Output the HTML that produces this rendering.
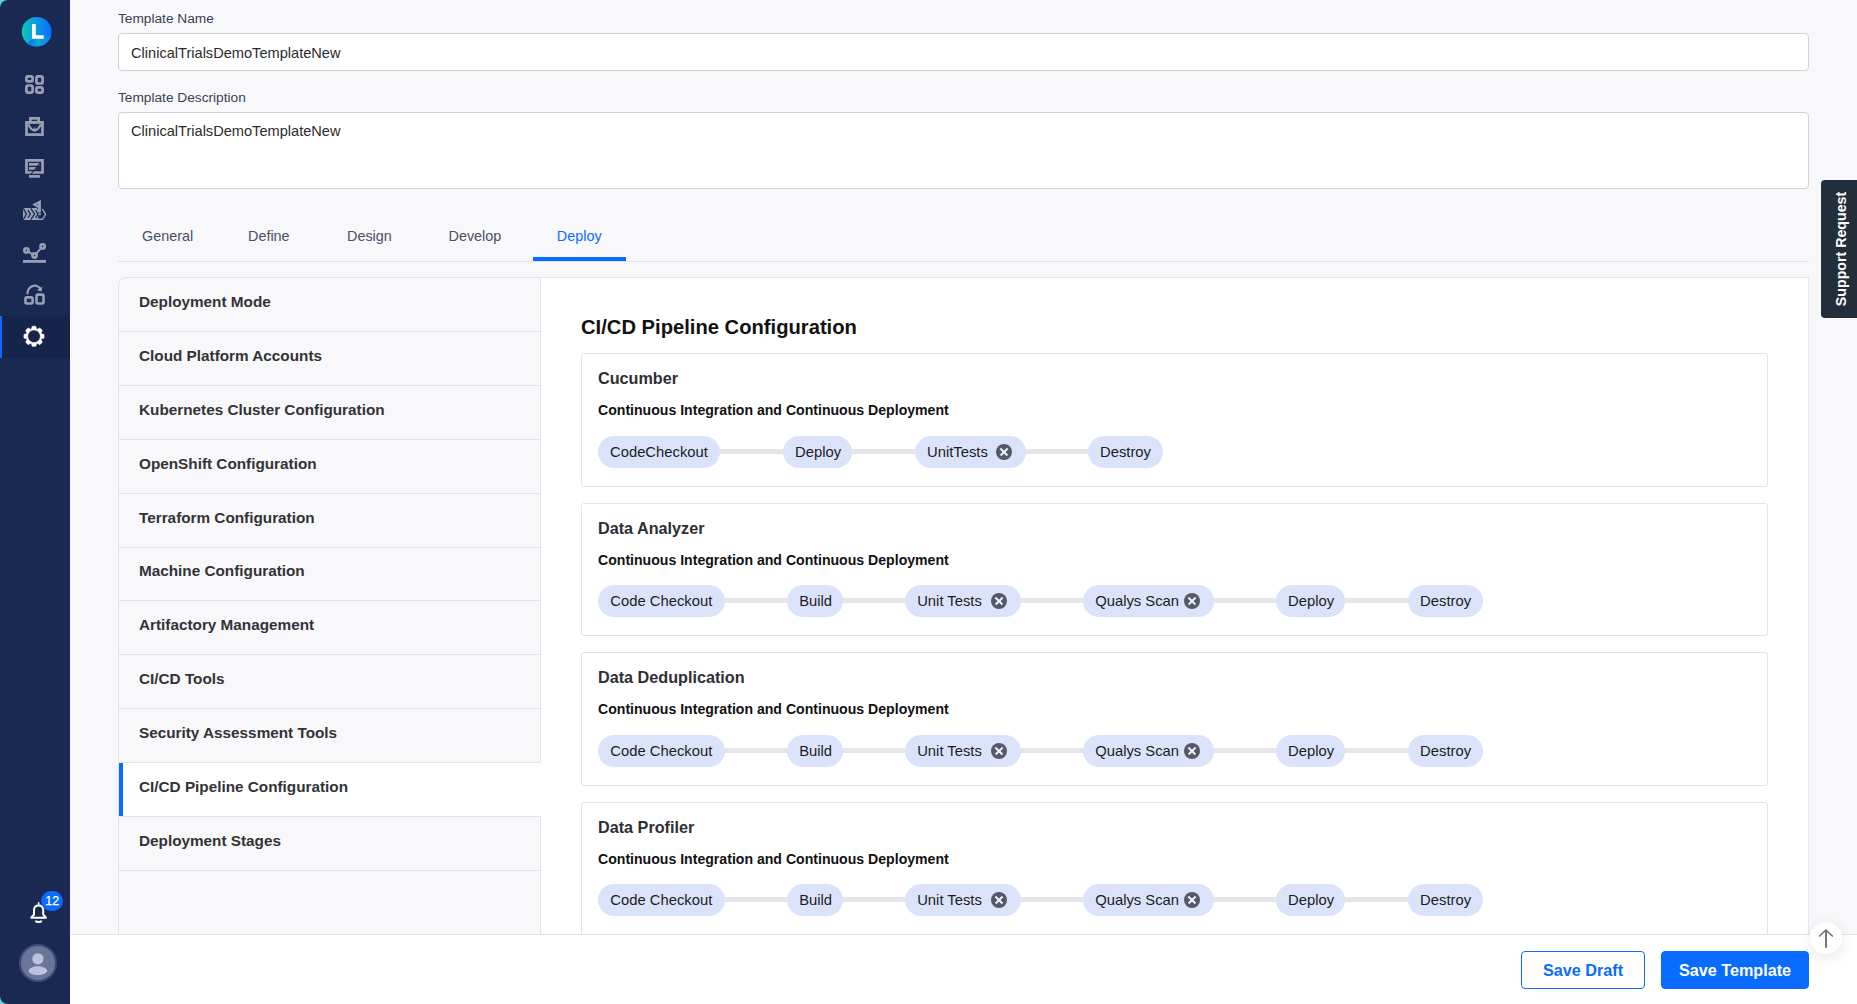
<!DOCTYPE html>
<html><head><meta charset="utf-8">
<style>
*{box-sizing:border-box;margin:0;padding:0}
html,body{width:1857px;height:1004px;overflow:hidden}
body{position:relative;background:#f8f8fa;font-family:"Liberation Sans",sans-serif;color:#222}
.abs{position:absolute}
#corner{position:absolute;left:0;top:0;width:70px;height:1004px;background:#62d0d0}
#side{position:absolute;left:0;top:0;width:70px;height:1004px;background:#192952;border-radius:8px 0 0 8px}
.lbl{position:absolute;left:118px;font-size:13.7px;color:#3b4150;line-height:16px}
.inp{position:absolute;left:118px;width:1691px;background:#fff;border:1px solid #cfd3dc;border-radius:4px}
.inp span{position:absolute;left:12px;font-size:14.6px;color:#2b2b2b;line-height:17px}
.tab{position:absolute;top:228px;font-size:14.4px;color:#4b5064;line-height:17px;white-space:nowrap}
#tabline{position:absolute;left:118px;top:261px;width:1691px;height:1px;background:#e1e3e8}
#tabul{position:absolute;left:533px;top:257px;width:93px;height:4px;background:#0a6cff}
#menu{position:absolute;left:118px;top:277px;width:423px;height:657px;border:1px solid #e3e4ea;border-right:none;border-bottom:none;border-radius:8px 0 0 0;overflow:hidden;background:#f8f8fa}
.mi{position:absolute;left:0;width:422px;height:54px;border-bottom:1px solid #e3e4ea;border-right:1px solid #e3e4ea;font-size:15.3px;font-weight:700;color:#333337}
.mi span{position:absolute;left:20px;top:14.5px;line-height:18px;white-space:nowrap}
.mi.act{background:#fff;border-right:none;width:423px}
.mi.act::before{content:"";position:absolute;left:0;top:0;width:4px;height:53px;background:#0a6cff}
#content{position:absolute;left:541px;top:277px;width:1268px;height:657px;background:#fff;border-top:1px solid #e6e6ee;border-right:1px solid #e6e6ee;border-radius:0}
#heading{position:absolute;left:581px;top:315px;font-size:20.2px;font-weight:700;color:#111;line-height:24px;white-space:nowrap}
.card{--p:82px;position:absolute;left:581px;width:1187px;height:134px;border:1px solid #e3e4ea;border-radius:3px;background:#fff}
.card .t{position:absolute;left:16px;top:14px;font-size:16.2px;font-weight:700;color:#2f2f33;line-height:20px;white-space:nowrap}
.card .s{position:absolute;left:16px;top:48px;font-size:14.1px;font-weight:700;color:#111;line-height:17px;white-space:nowrap}
.pill{position:absolute;top:var(--p);height:32px;border-radius:16px;background:#dbe3fa;font-size:14.8px;color:#1c1c22;line-height:32px;padding-left:12px;white-space:nowrap}
.conn{position:absolute;top:calc(var(--p) + 13px);height:5px;background:#e6e6e8}
.x{position:absolute;right:13.6px;top:8px;width:16px;height:16px;border-radius:50%;background:#555966}
.x::before,.x::after{content:"";position:absolute;left:3px;top:7.15px;width:10px;height:1.7px;background:#eef2ff;transform:rotate(45deg)}
.x::after{transform:rotate(-45deg)}
#footer{position:absolute;left:70px;top:934px;width:1787px;height:70px;background:#fff;border-top:1px solid #e3e4e8}
.btn{position:absolute;top:951px;height:38px;border-radius:4px;font-size:16.2px;font-weight:700;line-height:36px;text-align:center}
#support{position:absolute;left:1821px;top:180px;width:36px;height:138px;background:#222e3c;border-radius:4px 0 0 4px}
#support span{position:absolute;left:50%;top:50%;transform:translate(calc(-50% + 2px),-50%) rotate(-90deg);color:#fff;font-weight:700;font-size:14.2px;white-space:nowrap;line-height:16px}
#totop{position:absolute;left:1810px;top:922px;width:32px;height:32px;border-radius:50%;background:#fff;box-shadow:0 4px 14px rgba(40,40,80,.10)}
#totop svg{position:absolute;left:0;top:0}
</style></head><body>
<div id="corner"></div>
<div id="side"></div>
<!-- SIDEBAR -->
<svg class="abs" style="left:0;top:0" width="70" height="1004" viewBox="0 0 70 1004">
  <defs>
    <linearGradient id="lg" x1="0" y1="0" x2="1" y2="0">
      <stop offset="0" stop-color="#0ccbb8"/>
      <stop offset="0.45" stop-color="#0a9ee0"/>
      <stop offset="1" stop-color="#0a6cff"/>
    </linearGradient>
    <linearGradient id="lg2" x1="0" y1="0" x2="1" y2="0">
      <stop offset="0" stop-color="#0a6cff"/>
      <stop offset="0.45" stop-color="#0aa6d8"/>
      <stop offset="1" stop-color="#0a7cf6"/>
    </linearGradient>
  </defs>
  <!-- logo -->
  <circle cx="36.7" cy="31.8" r="14.9" fill="url(#lg)"/>
  <path d="M27.8 42.8 L34 37.5 L51.2 36 A14.9 14.9 0 0 1 27.8 42.8 Z" fill="url(#lg2)"/>
  <path d="M32 24 h3.8 v11.3 h7.9 v3.5 h-11.7 z" fill="#fff"/>
  <g fill="none" stroke="#9aa0b4" stroke-width="2.7">
    <!-- grid -->
    <rect x="26.4" y="76.4" width="6.2" height="5.0" rx="1.6"/>
    <rect x="36.4" y="76.4" width="6.2" height="7.1" rx="1.6"/>
    <rect x="26.4" y="85.5" width="6.2" height="7.1" rx="1.6"/>
    <rect x="36.4" y="87.4" width="6.2" height="5.2" rx="1.6"/>
    <!-- briefcase -->
    <rect x="30.4" y="118.3" width="8.2" height="4" />
    <rect x="26.5" y="122.4" width="16" height="12.2" />
    <path d="M28.2 124.3 Q34.6 136.6 41 124.3" stroke-width="2.2"/>
    <path d="M34.6 127.6 V131.6" stroke-width="1.6"/>
    <!-- monitor -->
    <path d="M26.5 160.3 H42.5 V172.5 H26.5 Z" />
    <path d="M29 176.4 h10.9" />
    <path d="M29 164.35 h10.5" />
    <path d="M29 168.4 h7.2" />
  </g>
  <path d="M40.6 162.6 L30.6 174.5" stroke="#192952" stroke-width="1.1"/>
  <!-- ships -->
  <g fill="#9aa0b4">
    <path d="M40.9 200 L32.2 204.6 L37.9 208 L37.9 212.6 L40.9 212.6 Z"/>
    <rect x="37.9" y="213.3" width="3" height="1.8"/>
    <path d="M23 208 H36.6 L38.3 210.6 L38.3 217.2 L37.4 218.6 H42.7 V220 H23 Z"/>
    <path d="M41.6 208.9 L43.2 208.9 L46.4 214.2 L43 220 L41.6 220 L44.7 214.2 Z"/>
  </g>
  <g fill="none" stroke="#192952" stroke-width="1.3">
    <path d="M23.2 208.3 L26.4 214 L23.2 219.7"/>
    <path d="M27.9 210.2 L30.4 214 L27.9 217.8"/>
    <path d="M30.8 208.3 L34.5 214 L30.8 219.7"/>
    <path d="M35.6 210.2 L37.9 214 L35.6 217.8"/>
  </g>
  <circle cx="37.4" cy="204.6" r="0.6" fill="#192952"/>
  <!-- chart -->
  <g fill="none" stroke="#9aa0b4" stroke-width="2.6">
    <circle cx="26.4" cy="250.4" r="2.1"/>
    <circle cx="34.5" cy="255.5" r="2.1"/>
    <circle cx="42.6" cy="246.4" r="2.1"/>
    <path d="M28.6 251.8 L32.3 254.1 M36.2 253.6 L40.9 248.3" stroke-width="2"/>
  </g>
  <rect x="23" y="260" width="23" height="2.8" fill="#9aa0b4"/>
  <!-- shapes with arrow -->
  <g fill="none" stroke="#9aa0b4" stroke-width="2.6">
    <rect x="25.5" y="297.4" width="7.1" height="6.1" rx="1.4"/>
    <rect x="36.5" y="294.6" width="7" height="8.9" rx="1.4"/>
    <path d="M27.5 294.3 C27.5 284.5 38 283 41.2 290.2" stroke-width="2.2"/>
  </g>
  <path d="M42.2 286.5 L41.6 291.6 L37 290.2 Z" fill="#9aa0b4"/>
  <!-- active -->
  <rect x="0" y="316" width="70" height="42" fill="#16234a"/>
  <rect x="0" y="316" width="2" height="42" fill="#0a6cff"/>
  <!-- gear -->
  <g transform="translate(34 336.3)" fill="#fff">
    <path id="gear" fill-rule="evenodd" stroke="#fff" stroke-width="0.6" stroke-linejoin="round" d="M-2.77 -6.86 L-1.74 -10.05 L1.74 -10.05 L2.77 -6.86 L2.89 -6.81 L5.88 -8.33 L8.33 -5.88 L6.81 -2.89 L6.86 -2.77 L10.05 -1.74 L10.05 1.74 L6.86 2.77 L6.81 2.89 L8.33 5.88 L5.88 8.33 L2.89 6.81 L2.77 6.86 L1.74 10.05 L-1.74 10.05 L-2.77 6.86 L-2.89 6.81 L-5.88 8.33 L-8.33 5.88 L-6.81 2.89 L-6.86 2.77 L-10.05 1.74 L-10.05 -1.74 L-6.86 -2.77 L-6.81 -2.89 L-8.33 -5.88 L-5.88 -8.33 L-2.89 -6.81 Z M0 -6.3 A6.3 6.3 0 1 0 0.01 -6.3 Z"/>
  </g>
  <!-- bell -->
  <g fill="none" stroke="#fff" stroke-width="2">
    <path d="M31.3 917.7 L45.9 917.7 L43.2 914.5 L43.2 910.2 C43.2 907.2 41.2 905.6 38.6 905.6 C36 905.6 34 907.2 34 910.2 L34 914.5 Z" stroke-linejoin="round"/>
    <path d="M35.6 920.6 C36.2 922.6 41 922.6 41.6 920.6"/>
  </g>
  <rect x="37.8" y="902.2" width="1.6" height="2.6" fill="#fff"/>
  <rect x="41" y="891" width="22" height="20" rx="10" fill="#0a6cff"/>
  <text x="52.2" y="905.2" text-anchor="middle" font-family="Liberation Sans" font-size="12.5" fill="#fff" stroke="#fff" stroke-width="0.25">12</text>
  <!-- avatar -->
  <circle cx="38" cy="963" r="18" fill="#69769a" stroke="#3d4b72" stroke-width="2"/>
  <circle cx="37.9" cy="958.8" r="5.6" fill="#bac4e0"/>
  <path d="M28.4 970.8 C30.5 964.8 45.3 964.8 47.4 970.8 C45.3 976.6 30.5 976.6 28.4 970.8 Z" fill="#bac4e0"/>
</svg>

<!-- /SIDEBAR -->

<div class="lbl" style="top:11px">Template Name</div>
<div class="inp" style="top:33px;height:38px"><span style="top:11px">ClinicalTrialsDemoTemplateNew</span></div>
<div class="lbl" style="top:90px">Template Description</div>
<div class="inp" style="top:112px;height:77px"><span style="top:10px">ClinicalTrialsDemoTemplateNew</span></div>

<div class="tab" style="left:142px">General</div>
<div class="tab" style="left:248px">Define</div>
<div class="tab" style="left:347px">Design</div>
<div class="tab" style="left:448.5px">Develop</div>
<div class="tab" style="left:556.8px;color:#0a6cff">Deploy</div>
<div id="tabline"></div>
<div id="tabul"></div>

<div id="content"></div>
<div id="menu">
  <div class="mi" style="top:0"><span>Deployment Mode</span></div>
  <div class="mi" style="top:54px"><span>Cloud Platform Accounts</span></div>
  <div class="mi" style="top:108px"><span>Kubernetes Cluster Configuration</span></div>
  <div class="mi" style="top:162px"><span>OpenShift Configuration</span></div>
  <div class="mi" style="top:216px"><span>Terraform Configuration</span></div>
  <div class="mi" style="top:269px"><span>Machine Configuration</span></div>
  <div class="mi" style="top:323px"><span>Artifactory Management</span></div>
  <div class="mi" style="top:377px"><span>CI/CD Tools</span></div>
  <div class="mi" style="top:431px"><span>Security Assessment Tools</span></div>
  <div class="mi act" style="top:485px"><span>CI/CD Pipeline Configuration</span></div>
  <div class="mi" style="top:539px"><span>Deployment Stages</span></div>
  <div class="mi" style="top:593px;height:70px;border-bottom:none"></div>
</div>

<div id="heading">CI/CD Pipeline Configuration</div>

<!-- CARDS -->
<div class="card" style="top:353px">
  <div class="t">Cucumber</div>
  <div class="s">Continuous Integration and Continuous Deployment</div>
  <div class="conn" style="left:132.0px;width:75.0px"></div>
  <div class="conn" style="left:264.0px;width:75.0px"></div>
  <div class="conn" style="left:437.6px;width:74.4px"></div>
  <div class="pill" style="left:16.0px;width:122.0px">CodeCheckout</div>
  <div class="pill" style="left:201.0px;width:69.0px">Deploy</div>
  <div class="pill" style="left:333.0px;width:110.6px">UnitTests<i class="x"></i></div>
  <div class="pill" style="left:506.0px;width:75.0px">Destroy</div>
</div>
<div class="card" style="top:503px;height:133px;--p:81px">
  <div class="t">Data Analyzer</div>
  <div class="s">Continuous Integration and Continuous Deployment</div>
  <div class="conn" style="left:136.6px;width:74.6px"></div>
  <div class="conn" style="left:254.6px;width:74.6px"></div>
  <div class="conn" style="left:432.6px;width:74.6px"></div>
  <div class="conn" style="left:625.6px;width:74.5px"></div>
  <div class="conn" style="left:757.1px;width:75.0px"></div>
  <div class="pill" style="left:16.3px;width:126.3px">Code Checkout</div>
  <div class="pill" style="left:205.2px;width:55.4px">Build</div>
  <div class="pill" style="left:323.2px;width:115.4px">Unit Tests<i class="x"></i></div>
  <div class="pill" style="left:501.2px;width:130.4px">Qualys Scan<i class="x"></i></div>
  <div class="pill" style="left:694.1px;width:69.0px">Deploy</div>
  <div class="pill" style="left:826.1px;width:74.8px">Destroy</div>
</div>
<div class="card" style="top:652px">
  <div class="t">Data Deduplication</div>
  <div class="s">Continuous Integration and Continuous Deployment</div>
  <div class="conn" style="left:136.6px;width:74.6px"></div>
  <div class="conn" style="left:254.6px;width:74.6px"></div>
  <div class="conn" style="left:432.6px;width:74.6px"></div>
  <div class="conn" style="left:625.6px;width:74.5px"></div>
  <div class="conn" style="left:757.1px;width:75.0px"></div>
  <div class="pill" style="left:16.3px;width:126.3px">Code Checkout</div>
  <div class="pill" style="left:205.2px;width:55.4px">Build</div>
  <div class="pill" style="left:323.2px;width:115.4px">Unit Tests<i class="x"></i></div>
  <div class="pill" style="left:501.2px;width:130.4px">Qualys Scan<i class="x"></i></div>
  <div class="pill" style="left:694.1px;width:69.0px">Deploy</div>
  <div class="pill" style="left:826.1px;width:74.8px">Destroy</div>
</div>
<div class="card" style="top:802px;--p:81px">
  <div class="t">Data Profiler</div>
  <div class="s">Continuous Integration and Continuous Deployment</div>
  <div class="conn" style="left:136.6px;width:74.6px"></div>
  <div class="conn" style="left:254.6px;width:74.6px"></div>
  <div class="conn" style="left:432.6px;width:74.6px"></div>
  <div class="conn" style="left:625.6px;width:74.5px"></div>
  <div class="conn" style="left:757.1px;width:75.0px"></div>
  <div class="pill" style="left:16.3px;width:126.3px">Code Checkout</div>
  <div class="pill" style="left:205.2px;width:55.4px">Build</div>
  <div class="pill" style="left:323.2px;width:115.4px">Unit Tests<i class="x"></i></div>
  <div class="pill" style="left:501.2px;width:130.4px">Qualys Scan<i class="x"></i></div>
  <div class="pill" style="left:694.1px;width:69.0px">Deploy</div>
  <div class="pill" style="left:826.1px;width:74.8px">Destroy</div>
</div>
<!-- /CARDS -->

<div id="footer"></div>
<div class="btn" style="left:1521px;width:124px;border:1px solid #0a6cff;color:#0a6cff;background:#fff">Save Draft</div>
<div class="btn" style="left:1661px;width:148px;background:#0a6cff;color:#fff;border:1px solid #0a6cff">Save Template</div>
<div id="totop"><svg width="32" height="32" viewBox="0 0 32 32"><path d="M16 8.4 V25.8" stroke="#6e6e72" stroke-width="1.9" fill="none"/><path d="M9.1 14.6 L16 7.9 L22.8 14.6" stroke="#6e6e72" stroke-width="1.4" fill="none"/></svg></div>
<div id="support"><span>Support Request</span></div>
</body></html>
